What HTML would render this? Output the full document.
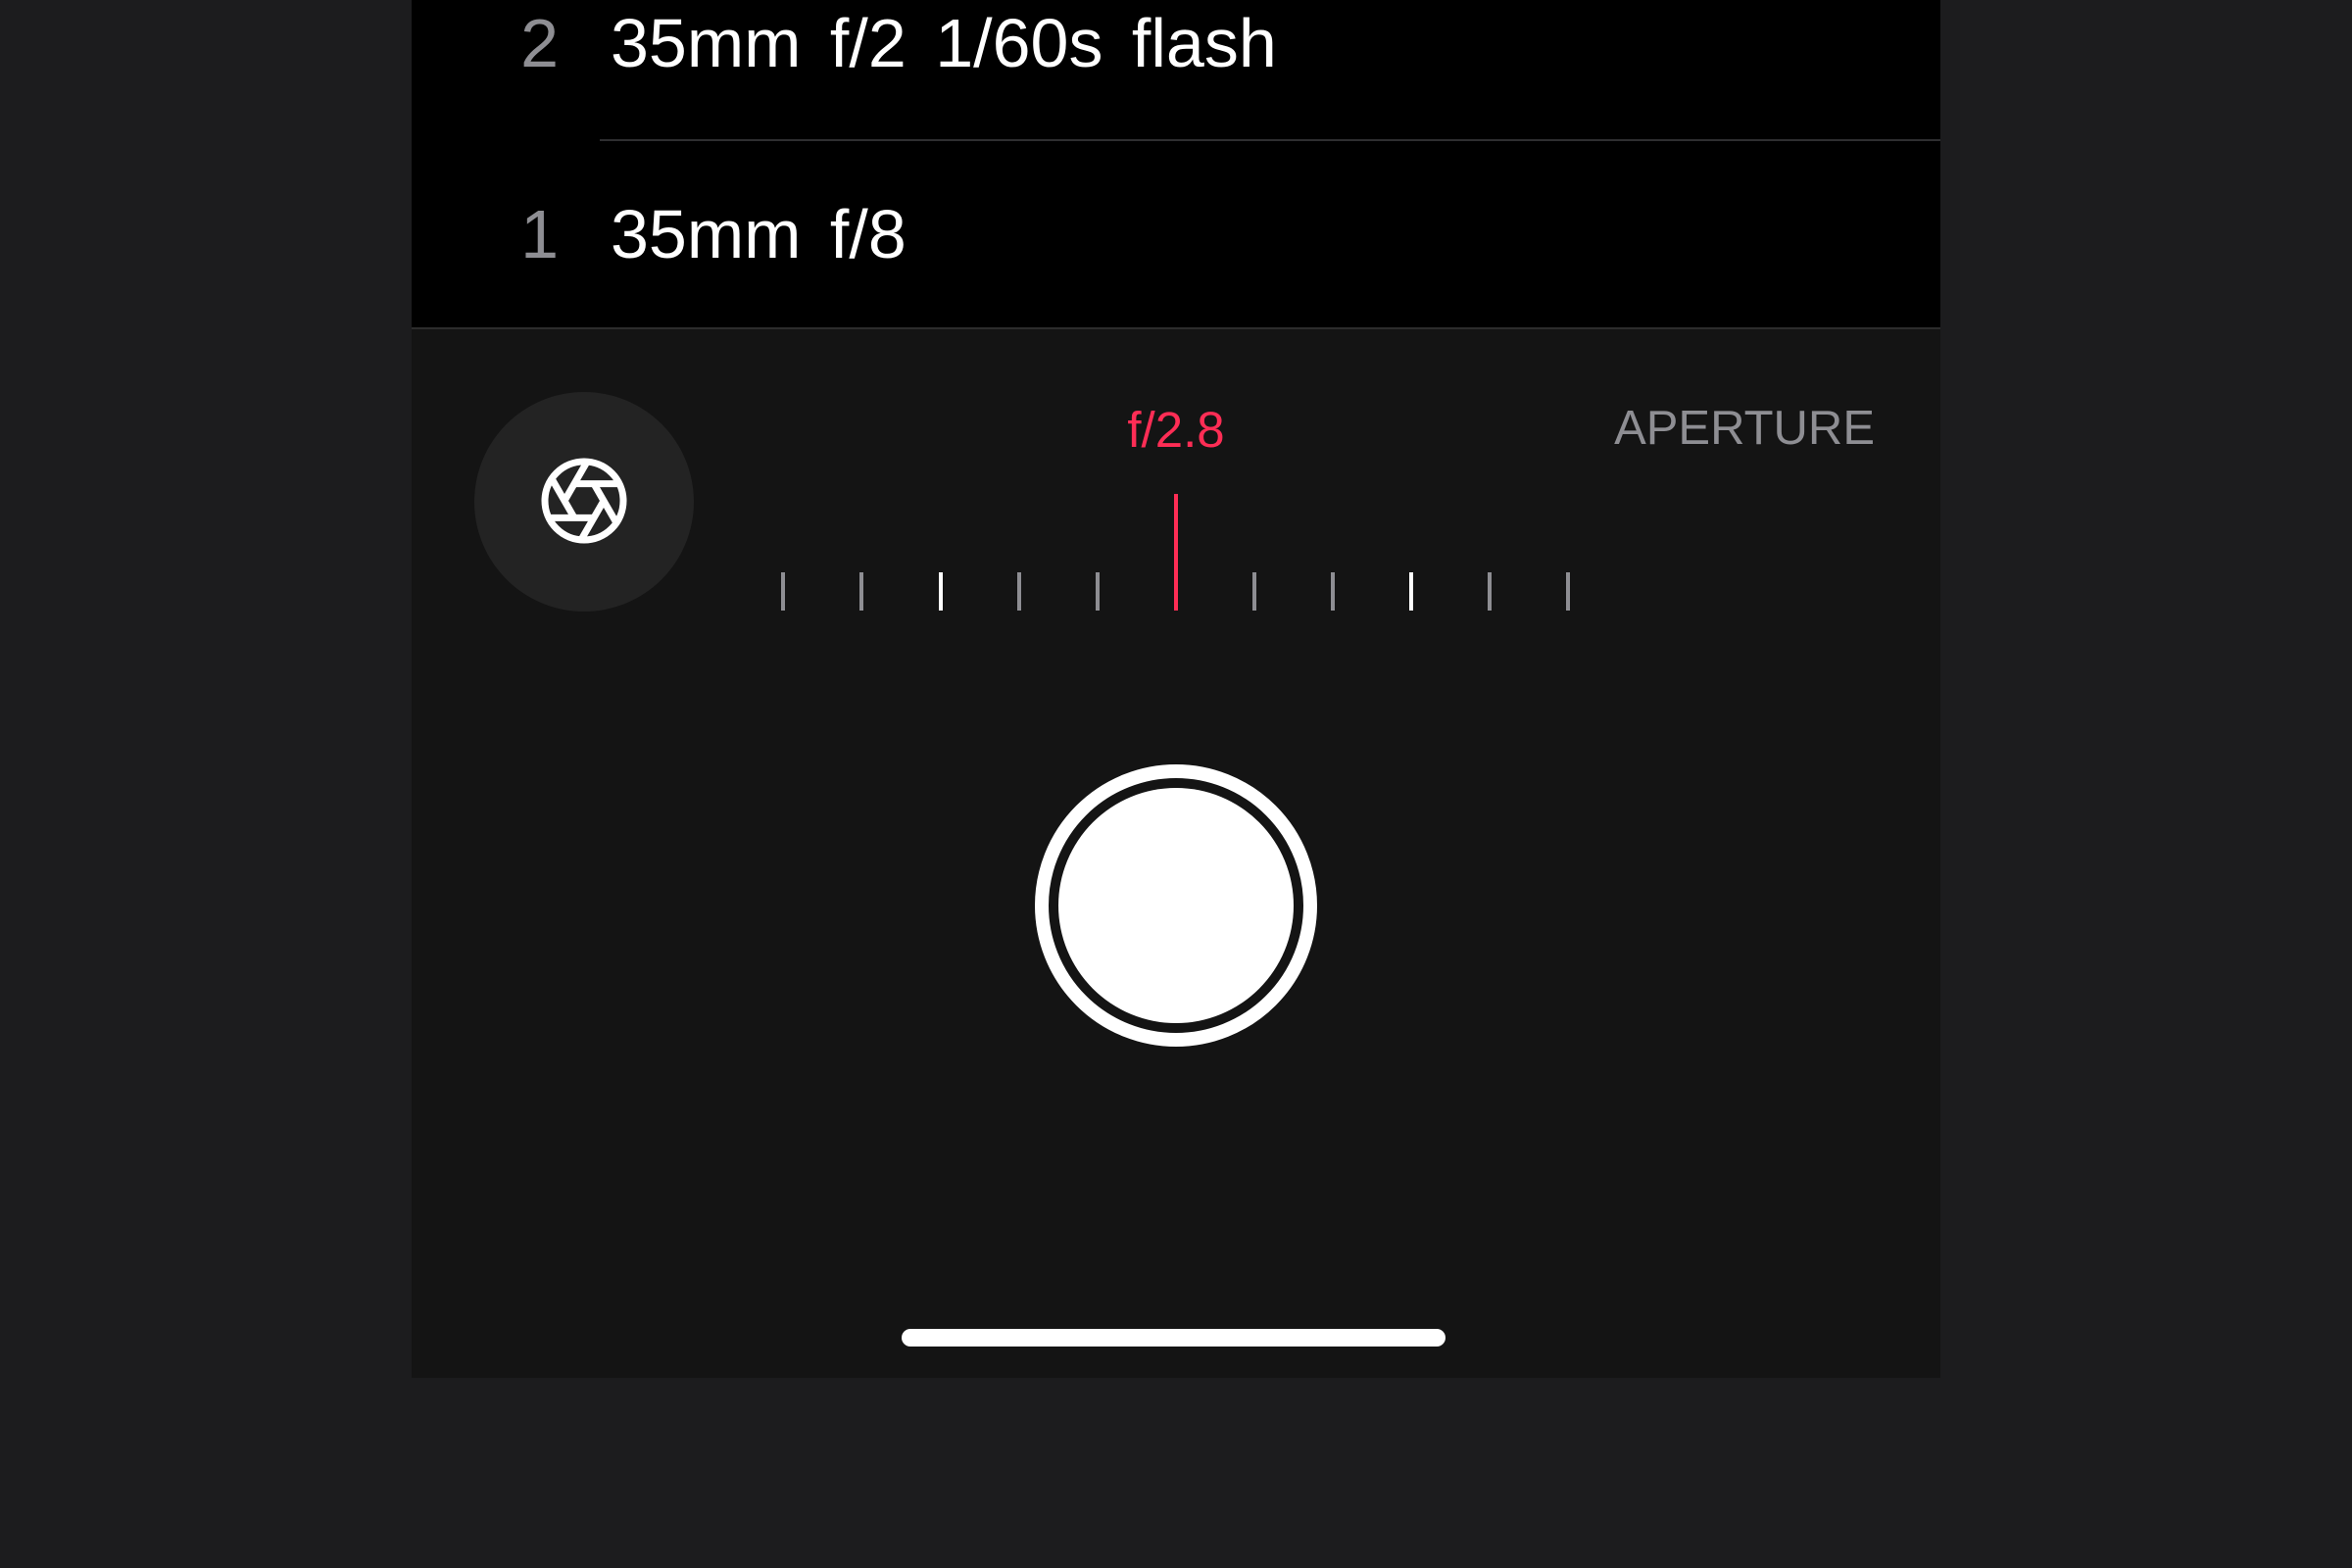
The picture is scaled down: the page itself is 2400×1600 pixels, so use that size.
<!DOCTYPE html>
<html><head><meta charset="utf-8"><style>
html,body{margin:0;padding:0}
body{width:2400px;height:1600px;background:#1c1c1e;position:relative;overflow:hidden;font-family:"Liberation Sans",sans-serif}
.panel{position:absolute;left:420px;top:0;width:1560px;height:1406px;background:#141414}
.top{position:absolute;left:0;top:0;width:1560px;height:334px;background:#000;border-bottom:2px solid #2c2c2c}
.sep{position:absolute;left:192px;top:142px;width:1368px;height:2px;background:#2e2e30}
.num{position:absolute;width:150px;text-align:right;left:0;font-size:70px;color:#8e8e93;line-height:1}
.txt{position:absolute;left:203px;font-size:70px;color:#fff;word-spacing:10px;line-height:1;white-space:nowrap}
.tick{position:absolute;top:584px;width:4px;height:39px;background:#8e8e93}
</style></head><body>
<div class="panel">
 <div class="top">
  <div class="num" style="top:9px">2</div>
  <div class="txt" style="top:9px">35mm f/2 1/60s flash</div>
  <div class="sep"></div>
  <div class="num" style="top:204px">1</div>
  <div class="txt" style="top:204px">35mm f/8</div>
 </div>
 <div style="position:absolute;left:64px;top:400px;width:224px;height:224px;border-radius:50%;background:#232323"></div>
 <svg style="position:absolute;left:126px;top:461px" width="100" height="100" viewBox="-50 -50 100 100">
  <g stroke="#fff" stroke-width="7" fill="none" stroke-linecap="butt">
   <circle r="40"/>
   <line x1="20" y1="0" x2="-3.03" y2="39.89"/>
   <line x1="10" y1="17.32" x2="-36.06" y2="17.32"/>
   <line x1="-10" y1="17.32" x2="-33.03" y2="-22.57"/>
   <line x1="-20" y1="0" x2="3.03" y2="-39.89"/>
   <line x1="-10" y1="-17.32" x2="36.06" y2="-17.32"/>
   <line x1="10" y1="-17.32" x2="33.03" y2="22.57"/>
  </g>
 </svg>
 <div style="position:absolute;left:680px;width:200px;text-align:center;top:413px;font-size:51px;color:#ff2d55;line-height:1">f/2.8</div>
 <div style="position:absolute;right:67px;top:413px;font-size:49px;color:#8e8e93;line-height:1">APERTURE</div>
 <div class="tick" style="left:377px"></div>
 <div class="tick" style="left:457px"></div>
 <div class="tick" style="left:538px;background:#fff"></div>
 <div class="tick" style="left:618px"></div>
 <div class="tick" style="left:698px"></div>
 <div class="tick" style="left:778px;top:504px;height:119px;background:#ff2d55"></div>
 <div class="tick" style="left:858px"></div>
 <div class="tick" style="left:938px"></div>
 <div class="tick" style="left:1018px;background:#fff"></div>
 <div class="tick" style="left:1098px"></div>
 <div class="tick" style="left:1178px"></div>
 <div style="position:absolute;left:636px;top:780px;width:260px;height:260px;border-radius:50%;border:14px solid #fff"></div>
 <div style="position:absolute;left:660px;top:804px;width:240px;height:240px;border-radius:50%;background:#fff"></div>
 <div style="position:absolute;left:500px;top:1356px;width:555px;height:18px;border-radius:9px;background:#fff"></div>
</div>
</body></html>
